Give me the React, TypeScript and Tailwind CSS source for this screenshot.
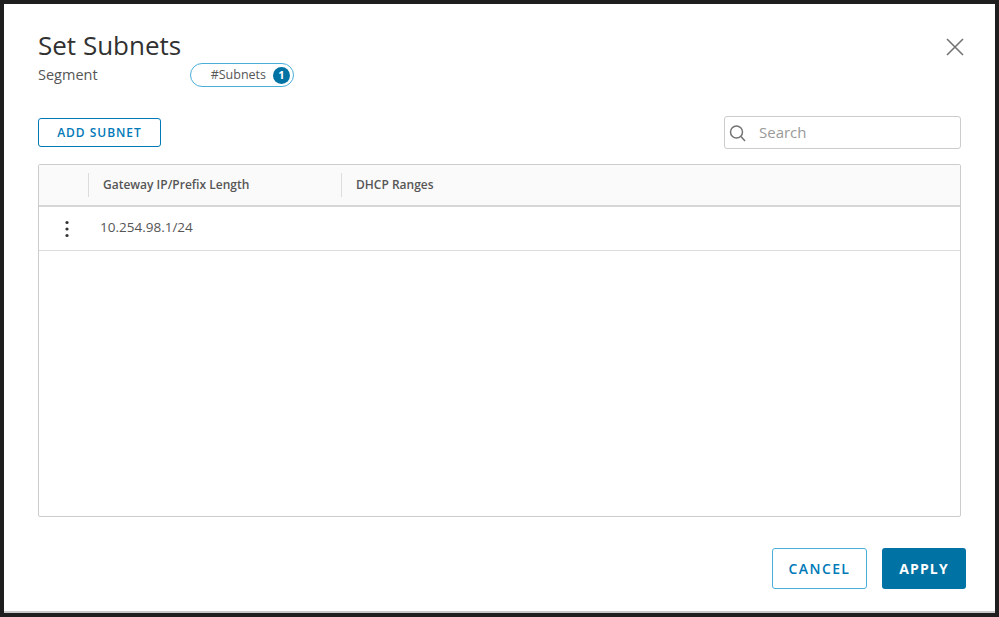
import React from "react";

const font = { fontFamily: "'Open Sans', Lato, sans-serif" };

export default function App() {
  return (
    <div className="w-[999px] h-[617px] bg-[#1e1e1e] pt-[4px] pl-[4px] pr-[4px] pb-[4px]" style={font}>
      <div className="w-[991px] h-[609px] bg-white border-b-2 border-[#c8c8c8] flex flex-col px-[34px] pt-[24px] pb-[22px]">
        {/* header */}
        <div className="flex items-start justify-between">
          <div className="text-[26px] leading-[34px] text-[#313131] font-normal">Set Subnets</div>
          <button className="mt-[9px] mr-[-4px] text-[#737373]">
            <svg width="20" height="20" viewBox="0 0 20 20" fill="none" stroke="currentColor" strokeWidth="1.6">
              <path d="M2 2 L18 18 M18 2 L2 18" />
            </svg>
          </button>
        </div>
        <div className="flex items-center mt-[1px]">
          <div className="w-[152px] text-[14.5px] text-[#565656]">Segment</div>
          <div className="h-[24px] w-[104px] rounded-full border-[1.5px] border-[#49afd9] flex items-center justify-end pr-[3px] gap-[7px]">
            <span className="text-[12.5px] text-[#565656]">#Subnets</span>
            <span className="w-[17px] h-[17px] rounded-full bg-[#0072a3] text-white text-[11px] font-bold flex items-center justify-center">1</span>
          </div>
        </div>

        {/* toolbar */}
        <div className="flex items-center justify-between mt-[29px]">
          <button className="h-[29px] w-[123px] border border-[#0079b8] rounded-[3px] text-[#0079b8] text-[12px] font-semibold tracking-[0.08em]">
            ADD SUBNET
          </button>
          <div className="h-[33px] w-[237px] border border-[#cccccc] rounded-[3px] flex items-center pl-[4px] gap-[12px]">
            <svg width="18" height="18" viewBox="0 0 18 18" fill="none" stroke="#737373" strokeWidth="1.5">
              <circle cx="7.5" cy="8" r="6" />
              <path d="M12 12.5 L16 17" />
            </svg>
            <span className="text-[15px] text-[#9a9a9a]">Search</span>
          </div>
        </div>

        {/* table */}
        <div className="mt-[15px] h-[353px] border border-[#cccccc] rounded-[2px] flex flex-col">
          <div className="h-[42px] bg-[#fafafa] border-b-2 border-[#d6d6d6] flex items-center text-[12px] font-semibold text-[#565656]">
            <div className="w-[50px] h-[24px] border-r border-[#dddddd]" />
            <div className="w-[253px] h-[24px] border-r border-[#dddddd] pl-[14px] flex items-center">Gateway IP/Prefix Length</div>
            <div className="pl-[14px]">DHCP Ranges</div>
          </div>
          <div className="h-[44px] border-b border-[#dddddd] flex items-center">
            <div className="w-[50px] flex justify-center pl-[5px]">
              <svg width="4" height="18" viewBox="0 0 4 18" fill="#333">
                <circle cx="2" cy="2.5" r="1.6" />
                <circle cx="2" cy="9" r="1.6" />
                <circle cx="2" cy="15.5" r="1.6" />
              </svg>
            </div>
            <div className="pl-[11px] text-[13.5px] text-[#565656] pb-[3px]">10.254.98.1/24</div>
          </div>
        </div>

        {/* footer */}
        <div className="mt-auto flex justify-end gap-[15px] mr-[-5px]">
          <button className="h-[41px] w-[95px] border border-[#49afd9] rounded-[3px] text-[#0079b8] text-[14px] font-semibold tracking-[0.1em]">
            CANCEL
          </button>
          <button className="h-[41px] w-[84px] bg-[#0072a3] rounded-[3px] text-white text-[14px] font-bold tracking-[0.08em]">
            APPLY
          </button>
        </div>
      </div>
    </div>
  );
}
